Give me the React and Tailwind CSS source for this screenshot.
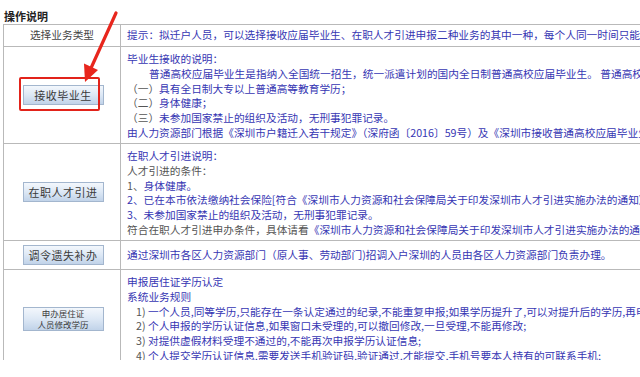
import React from 'react';

/* --------------------------------------------------------
   Business type button (light blue gradient)
---------------------------------------------------------*/
function TypeButton({ children, small }) {
  return (
    <div
      className={`w-[81px] ${small ? 'h-[24px]' : 'h-[20px]'} flex flex-col items-center justify-center border border-[#a3b6ce] bg-gradient-to-b from-[#f3f7fc] via-[#dde8f5] to-[#c1d3e9] text-[#3a3a3a] ${
        small ? 'text-[8.5px] leading-[11px]' : 'text-[11px] leading-[12px] tracking-[0.5px]'
      }`}
    >
      {children}
    </div>
  );
}

const G = ({ children }) => <span className='text-[#555]'>{children}</span>;

/* --------------------------------------------------------
   Row data: left button + right description lines
---------------------------------------------------------*/
const rows = [
  {
    height: 'h-[97px]',
    label: '接收毕业生',
    lines: [
      '毕业生接收的说明：',
      <span className='pl-[22px]'>普通高校应届毕业生是指纳入全国统一招生，统一派遣计划的国内全日制普通高校应届毕业生。 普通高校应届毕业生</span>,
      <><G>（一）</G>具有全日制大专以上普通高等教育学历；</>,
      <><G>（二）</G>身体健康；</>,
      <><G>（三）</G>未参加国家禁止的组织及活动，无刑事犯罪记录。</>,
      '由人力资源部门根据《深圳市户籍迁入若干规定》（深府函〔2016〕59号）及《深圳市接收普通高校应届毕业生实施办法》',
    ],
  },
  {
    height: 'h-[97px]',
    label: '在职人才引进',
    lines: [
      '在职人才引进说明：',
      <G>人才引进的条件：</G>,
      <><G>1、</G>身体健康。</>,
      '2、已在本市依法缴纳社会保险[符合《深圳市人力资源和社会保障局关于印发深圳市人才引进实施办法的通知》',
      '3、未参加国家禁止的组织及活动，无刑事犯罪记录。',
      <><G>符合在职人才引进申办条件，具体请看</G>《深圳市人力资源和社会保障局关于印发深圳市人才引进实施办法的通知》</>,
    ],
  },
  {
    height: 'h-[29px]',
    label: '调令遗失补办',
    lines: ['通过深圳市各区人力资源部门（原人事、劳动部门)招调入户深圳的人员由各区人力资源部门负责办理。'],
  },
  {
    height: 'h-[98px]',
    label: (
      <>
        <span>申办居住证</span>
        <span>人员修改学历</span>
      </>
    ),
    small: true,
    lines: [
      '申报居住证学历认定',
      '系统业务规则',
      <span className='pl-[9px]'><G>1)</G> 一个人员,同等学历,只能存在一条认定通过的纪录,不能重复申报;如果学历提升了,可以对提升后的学历,再申报;</span>,
      <span className='pl-[9px]'><G>2)</G> 个人申报的学历认证信息,如果窗口未受理的,可以撤回修改,一旦受理,不能再修改;</span>,
      <span className='pl-[9px]'><G>3)</G> 对提供虚假材料受理不通过的,不能再次申报学历认证信息;</span>,
      <span className='pl-[9px]'><G>4)</G> 个人提交学历认证信息,需要发送手机验证码,验证通过,才能提交,手机号要本人持有的可联系手机;</span>,
    ],
  },
];

export default function App() {
  return (
    <div className="relative w-[640px] h-[377px] overflow-hidden bg-white [font-family:'Noto_Sans_CJK_SC','Noto_Sans',sans-serif]">
      <div className='h-[360px] overflow-hidden pl-[3px] pt-[9px]'>
        {/* Section title */}
        <div className='h-[15px] text-[11px] leading-[15px] font-bold text-[#222] pl-[1px]'>操作说明</div>

        {/* Table */}
        <div className='w-[1000px] border-l border-t border-[#b9b9b9] text-[10.7px] leading-[14.8px] whitespace-nowrap'>
          <div className='grid grid-cols-[117px_1fr] h-[22px]'>
            <div className='border-r border-b border-[#b9b9b9] flex items-center justify-center text-[#444]'>选择业务类型</div>
            <div className='border-r border-b border-[#b9b9b9] flex items-center px-[6px] text-[#3636b3]'>
              提示：拟迁户人员，可以选择接收应届毕业生、在职人才引进申报二种业务的其中一种，每个人同一时间只能办理一种业务。
            </div>
          </div>

          {rows.map((row, i) => (
            <div key={i} className={`grid grid-cols-[117px_1fr] ${row.height}`}>
              <div className='border-r border-b border-[#b9b9b9] flex items-center justify-center pl-[2px]'>
                <TypeButton small={row.small}>{row.label}</TypeButton>
              </div>
              <div className={`border-r border-b border-[#b9b9b9] px-[6px] text-[#3636b3] overflow-hidden ${row.lines.length === 1 ? 'flex items-center' : 'pt-[5px]'}`}>
                {row.lines.map((line, j) => (
                  <div key={j}>{line}</div>
                ))}
              </div>
            </div>
          ))}
        </div>
      </div>

      {/* Red highlight box around the first button */}
      <div className='absolute left-[19px] top-[77px] w-[81px] h-[34px] border-2 border-[#e2231a] rounded-[2px]' />

      {/* Red arrow pointing at the button */}
      <svg className='absolute left-0 top-0' width='140' height='100' viewBox='0 0 140 100'>
        <path d='M116 13 L91.5 67' stroke='#e8261d' strokeWidth='3.2' strokeLinecap='round' fill='none' />
        <polygon points='85,82 98,70 84,63.5' fill='#e8261d' />
      </svg>
    </div>
  );
}
